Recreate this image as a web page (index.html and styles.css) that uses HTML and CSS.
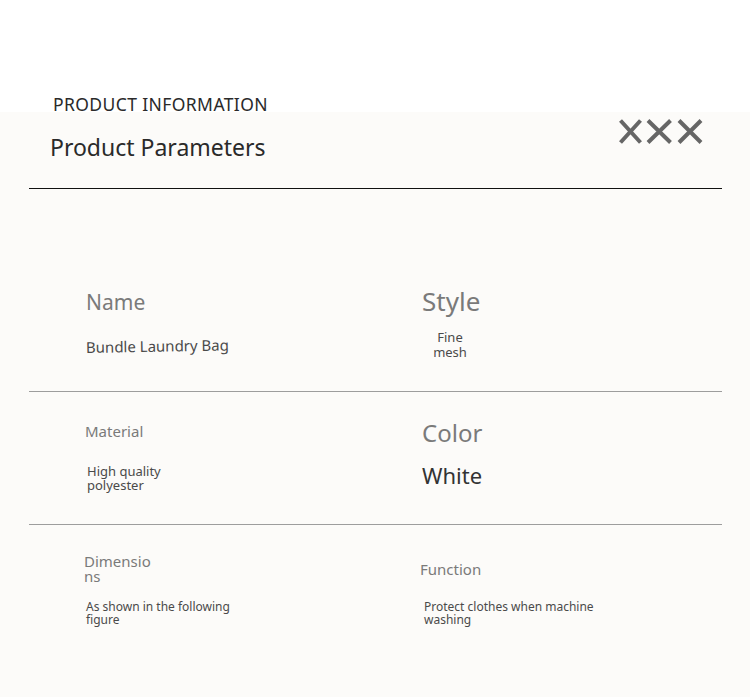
FILE: index.html
```html
<!DOCTYPE html>
<html>
<head>
    <title>Product Parameters</title>
    <link rel="stylesheet" href="styles.css">
</head>
<body>
    <div class="top">
        <div class="eyebrow">PRODUCT INFORMATION</div>
    </div>
    <div class="panel">
        <div class="head">
            <h1>Product Parameters</h1>
            <svg class="marks" width="84" height="25" viewBox="0 0 84 25">
                <path d="M1.5 1.5 L21.5 23.5 M21.5 1.5 L1.5 23.5" />
                <path d="M29 1.5 L51.5 23.5 M51.5 1.5 L29 23.5" />
                <path d="M60 1.5 L82 23.5 M82 1.5 L60 23.5" />
            </svg>
        </div>

        <div class="row row-1">
            <div class="cell left">
                <div class="label name-label">Name</div>
                <div class="value bag">Bundle Laundry Bag</div>
            </div>
            <div class="cell right">
                <div class="label style-label">Style</div>
                <div class="value mesh">Fine mesh</div>
            </div>
        </div>

        <div class="row row-2">
            <div class="cell left">
                <div class="label material-label">Material</div>
                <div class="value small material">High quality polyester</div>
            </div>
            <div class="cell right">
                <div class="label color-label">Color</div>
                <div class="value white">White</div>
            </div>
        </div>

        <div class="row row-3">
            <div class="cell left">
                <div class="label dim-label">Dimensions</div>
                <div class="value tiny dims">As shown in the following figure</div>
            </div>
            <div class="cell right">
                <div class="label func-label">Function</div>
                <div class="value tiny func">Protect clothes when machine washing</div>
            </div>
        </div>
    </div>
</body>
</html>
```

FILE: styles.css
```css
body {
    margin: 0;
    font-family: "Noto Sans", "Open Sans", sans-serif;
    background-color: #ffffff;
    color: #444;
}
.top {
    height: 112px;
}
.eyebrow {
    padding: 95px 0 0 53px;
    font-size: 17.5px;
    line-height: 18px;
    letter-spacing: 0.4px;
    color: #2a2a2a;
    height: 17px;
}
.panel {
    background-color: #fcfbf9;
    min-height: 585px;
    padding: 0 28px 0 29px;
}
.head {
    display: flex;
    justify-content: space-between;
    align-items: flex-start;
    height: 76px;
    border-bottom: 1px solid #111;
}
.head h1 {
    margin: 24px 0 0 21px;
    font-size: 23px;
    line-height: 23px;
    font-weight: normal;
    color: #2a2a2a;
}
.marks {
    margin: 7px 19px 0 0;
}
.marks path {
    fill: none;
    stroke: #666;
    stroke-width: 4;
}
.row {
    display: grid;
    grid-template-columns: 393px 1fr;
    border-bottom: 1px solid #9d9d9d;
}
.row-1 { height: 202px; }
.row-2 { height: 132px; }
.row-3 { border-bottom: none; }
.cell {
    display: flex;
    flex-direction: column;
    align-items: flex-start;
}
.left {
    padding-left: 57px;
}
.label {
    color: #7a7a7a;
    line-height: 1;
}
.value {
    color: #4a4a4a;
}

/* row 1 */
.name-label {
    margin-top: 103px;
    font-size: 21px;
}
.bag {
    margin-top: 27px;
    font-size: 15px;
    line-height: 15px;
    transform: rotate(-1deg);
    transform-origin: left center;
}
.style-label {
    margin-top: 99px;
    font-size: 26px;
}
.mesh {
    margin-top: 16px;
    width: 56px;
    font-size: 13px;
    line-height: 15px;
    text-align: center;
}

/* row 2 */
.material-label {
    margin: 32px 0 0 -1px;
    font-size: 15px;
}
.material {
    margin: 25px 0 0 1px;
    width: 100px;
    font-size: 13px;
    line-height: 14px;
}
.color-label {
    margin-top: 29px;
    font-size: 24px;
}
.white {
    margin-top: 19px;
    font-size: 22px;
    line-height: 22px;
    color: #333;
}

/* row 3 */
.dim-label {
    margin: 29px 0 0 -2px;
    width: 68px;
    font-size: 15px;
    line-height: 15px;
    word-break: break-all;
}
.tiny {
    font-size: 12px;
    line-height: 13px;
}
.dims {
    margin: 16px 0 0 0;
    width: 150px;
}
.func-label {
    margin: 37px 0 0 -2px;
    font-size: 15px;
}
.func {
    margin: 23px 0 0 2px;
    width: 180px;
}
```
